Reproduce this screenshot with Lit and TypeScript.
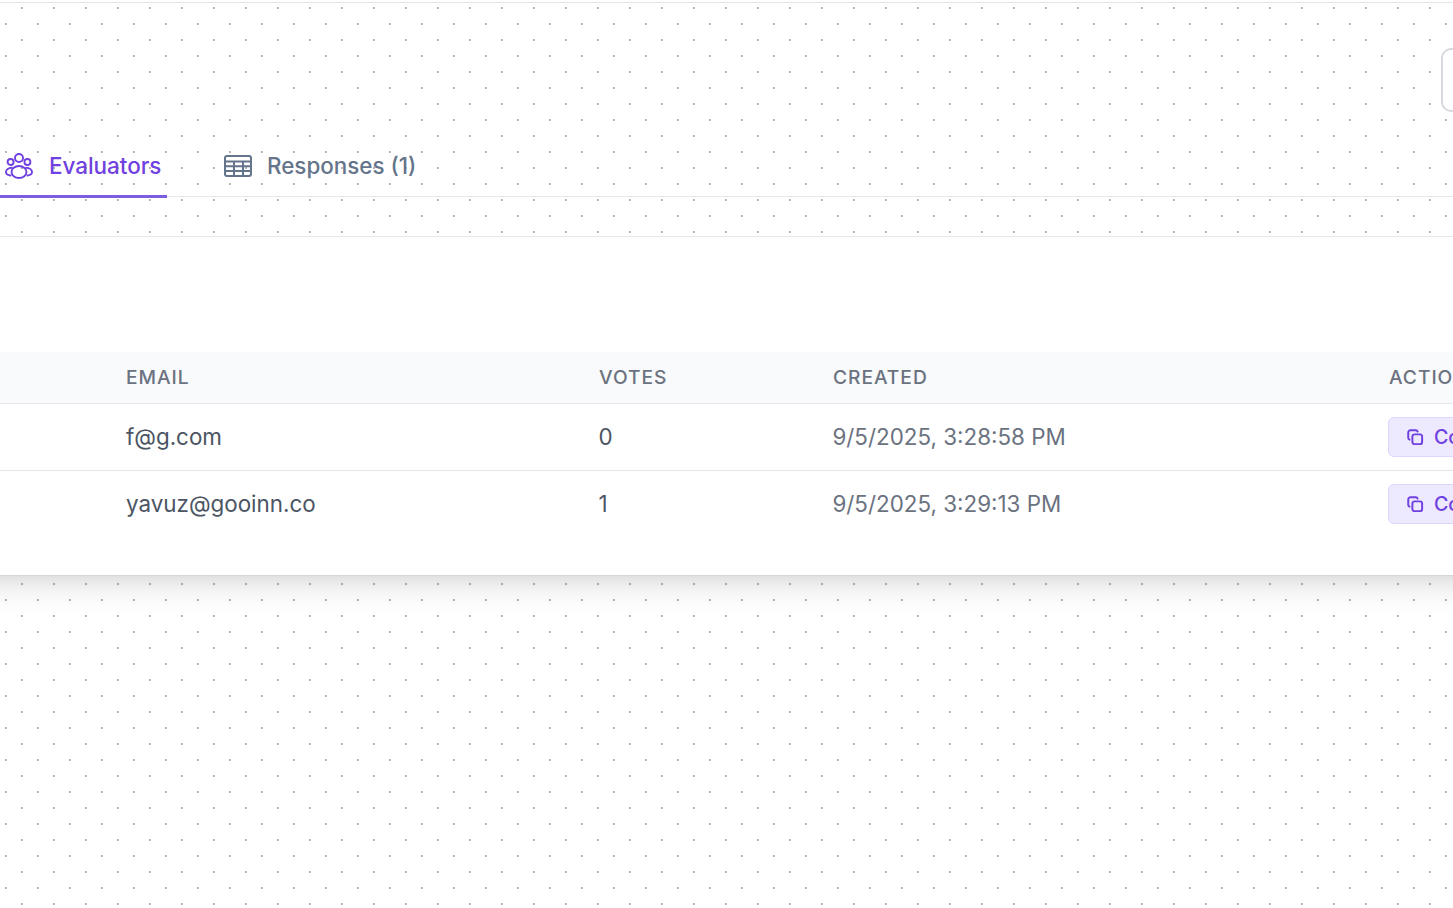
import { LitElement, html, css, svg } from "lit";
import { customElement } from "lit/decorators.js";

const rows = [
  { email: "f@g.com", votes: "0", created: "9/5/2025, 3:28:58 PM" },
  { email: "yavuz@gooinn.co", votes: "1", created: "9/5/2025, 3:29:13 PM" },
];

const copyIcon = svg`<svg class="copy" viewBox="0 0 24 24" fill="none" stroke="currentColor" stroke-width="2.6" stroke-linejoin="round" stroke-linecap="round"><rect x="8.5" y="8.5" width="13" height="13" rx="3"/><path d="M4.7 15.6A2.6 2.6 0 0 1 3 13V6a3 3 0 0 1 3-3h7a2.6 2.6 0 0 1 2.5 1.8"/></svg>`;

@customElement("app-root")
export class AppRoot extends LitElement {
  static styles = css`
    :host {
      display: block;
      width: 1453px;
      height: 908px;
      overflow: hidden;
      font-family: Inter, "Liberation Sans", sans-serif;
      background-color: #fff;
      background-image: radial-gradient(circle at center, #b4b4b8 0.9px, transparent 1.2px),
        radial-gradient(circle at center, #b4b4b8 0.9px, transparent 1.2px);
      background-size: 32px 32px;
      background-position: 6px -8px, -10px 8px;
    }
    .top {
      display: flex;
      justify-content: flex-end;
      margin-top: 2px;
      border-top: 1px solid #e5e7eb;
      height: 192px;
      padding-top: 45px;
      box-sizing: border-box;
    }
    .stub {
      width: 12px;
      height: 64px;
      box-sizing: border-box;
      background: #fff;
      border: 2px solid #d8d9de;
      border-right: 0;
      border-radius: 10px 0 0 10px;
    }
    .tabs {
      display: flex;
      height: 43px;
      margin-top: -41px;
      border-bottom: 1px solid #e5e7eb;
      box-sizing: content-box;
    }
    .tab {
      display: flex;
      align-items: center;
      height: 43px;
      box-sizing: border-box;
      padding-bottom: 18px;
      font-size: 22.4px;
      font-weight: 500;
      color: #64748b;
    }
    .tab svg {
      flex: none;
    }
    .tab.active {
      width: 167px;
      padding-left: 4px;
      padding-bottom: 17px;
      color: #7041e0;
      border-bottom: 3px solid #7c5ce0;
      margin-bottom: -2px;
      height: 45px;
      gap: 15px;
    }
    .tab.second {
      margin-left: 57px;
      gap: 15px;
    }
    .gap {
      height: 39px;
    }
    .card {
      height: 339px;
      margin: 0 -40px;
      padding: 115px 0 0 40px;
      box-sizing: border-box;
      border-top: 1px solid #e5e7eb;
      background: #fff;
      box-shadow: 0 10px 30px -4px rgba(0, 0, 0, 0.18), 0 1px 1px rgba(0, 0, 0, 0.05);
      clip-path: inset(0 0 -60px 0);
    }
    .table {
      width: 1629px;
    }
    .row {
      display: grid;
      grid-template-columns: 126px 473px 234px 556px 240px;
      align-items: center;
      height: 67px;
      border-bottom: 1px solid #e5e7eb;
      box-sizing: border-box;
      font-size: 22.4px;
      color: #4b5563;
    }
    .row:last-child {
      border-bottom-color: transparent;
    }
    .row.head {
      height: 52px;
      background: #f9fafb;
      font-size: 19.2px;
      font-weight: 500;
      letter-spacing: 0.96px;
      color: #6b7280;
    }
    .row.head span {
      padding-bottom: 2px;
    }
    .cell {
      padding-bottom: 2px;
    }
    .num {
      margin-left: -0.6px;
    }
    .muted {
      color: #6b7280;
    }
    .btn {
      display: flex;
      align-items: center;
      gap: 10px;
      width: 130px;
      height: 40px;
      margin-left: -1px;
      box-sizing: border-box;
      padding-left: 17px;
      background: #ede9fe;
      border: 1px solid #ddd6fe;
      border-radius: 6px;
      color: #7041e0;
      font-size: 19.6px;
      font-weight: 500;
    }
    .copy {
      width: 18px;
      height: 18px;
      flex: none;
    }
  `;

  render() {
    return html`
      <div class="top"><div class="stub"></div></div>
      <nav class="tabs">
        <div class="tab active">
          <svg width="30" height="30" viewBox="0 0 30 30" fill="none" stroke="currentColor" stroke-width="1.9" stroke-linecap="round" stroke-linejoin="round">
            <circle cx="15" cy="7" r="4" />
            <circle cx="6.6" cy="11" r="3" />
            <circle cx="23.4" cy="11" r="3" />
            <ellipse cx="15" cy="21" rx="7.5" ry="6" />
            <path d="M7.8 16.8C4.6 16.9 2 18.6 2 21c0 1.7 1.8 3.1 4.4 3.5" />
            <path d="M22.2 16.8c3.2.1 5.8 1.8 5.8 4.2 0 1.7-1.8 3.1-4.4 3.5" />
          </svg>
          Evaluators
        </div>
        <div class="tab second">
          <svg width="28" height="24" viewBox="0 0 28 24" fill="none" stroke="currentColor" stroke-width="2" stroke-linejoin="round">
            <rect x="1" y="2" width="26" height="20" rx="2" />
            <path d="M1 7.5h26M1 12.3h26M1 17h26M10 7.5V22M19 7.5V22" />
          </svg>
          Responses (1)
        </div>
      </nav>
      <div class="gap"></div>
      <section class="card">
        <div class="table">
          <div class="row head">
            <span></span><span>EMAIL</span><span>VOTES</span><span>CREATED</span><span>ACTIONS</span>
          </div>
          ${rows.map(
            (r) => html`
              <div class="row">
                <span></span>
                <span class="cell">${r.email}</span>
                <span class="cell num">${r.votes}</span>
                <span class="cell muted num">${r.created}</span>
                <span class="btn">${copyIcon}Copy</span>
              </div>
            `
          )}
        </div>
      </section>
    `;
  }
}
